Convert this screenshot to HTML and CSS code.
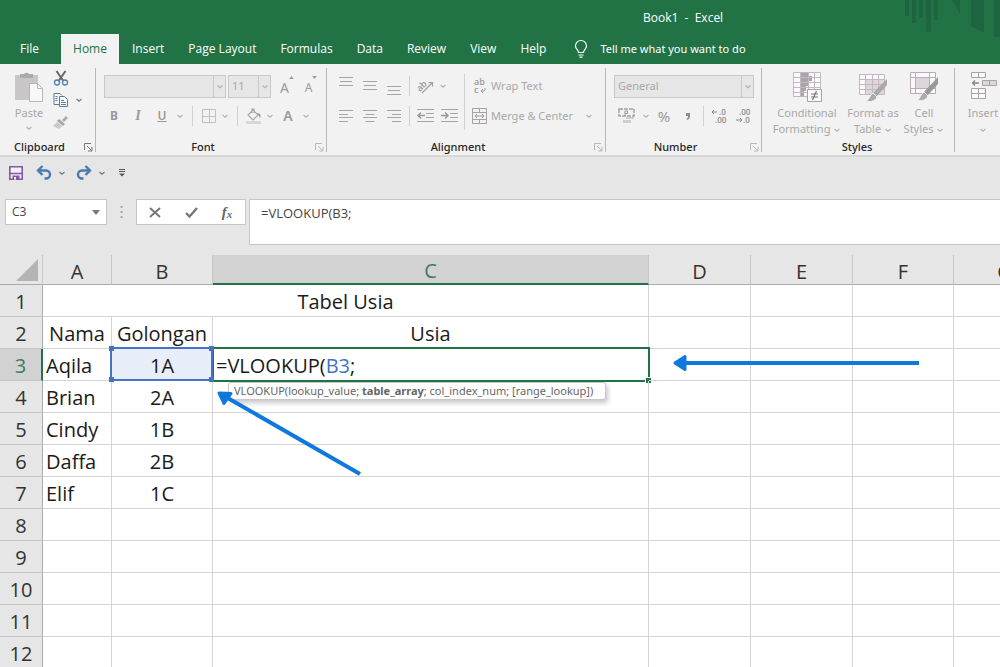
FILE: index.html
```html
<!DOCTYPE html>
<html lang="en">
<head>
<meta charset="utf-8">
<title>Book1 - Excel</title>
<link rel="stylesheet" href="styles.css">
</head>
<body>
<svg class="defs" aria-hidden="true">
  <symbol id="chev" viewBox="0 0 8 8"><path d="M1.500 3 4 5.200 6.500 3" fill="none" stroke="currentColor" stroke-width="1.200"/></symbol>
  <symbol id="launch" viewBox="0 0 9 9"><path d="M.5 7V.5H7M3 3l4.500 4.500M8 4v4H4" fill="none" stroke="currentColor"/></symbol>
</svg>

<header class="top">
  <svg class="deco" viewBox="0 0 96 38" aria-hidden="true">
    <path d="M1 0h4v16H1zM8 0h4v23H8zM15 0h4v18h-4zM22 0h5v32h-5zM30 0h4v20h-4zM48 0h8v14zM67 0h13v33L67 26zM90 0h6v37h-6z"/>
  </svg>
  <div class="title">Book1&nbsp; -&nbsp; Excel</div>
  <nav class="tabs">
    <button class="tab tab-file">File</button>
    <button class="tab tab-on">Home</button>
    <button class="tab">Insert</button>
    <button class="tab">Page Layout</button>
    <button class="tab">Formulas</button>
    <button class="tab">Data</button>
    <button class="tab">Review</button>
    <button class="tab">View</button>
    <button class="tab">Help</button>
    <button class="tab tell"><svg width="14" height="18" viewBox="0 0 14 18"><path d="M4.500 12.500c0-2.500-3-3.200-3-6.500a5.500 5.500 0 0 1 11 0c0 3.300-3 4-3 6.500zM4.500 15h5M5.500 17.200h3" fill="none" stroke="#fff" stroke-width="1.200"/></svg>Tell me what you want to do</button>
  </nav>
</header>

<section class="ribbon">
  <div class="group g-clip">
    <div class="body">
      <button class="big paste">
        <svg width="30" height="32" viewBox="0 0 30 32"><path d="M1 4h23v25H1z" fill="#c9c6c8"/><path d="M6 7V3h4a3 3 0 0 1 5 0h4v4z" fill="#aaa"/><path d="M15.500 12.500h8l5 5v13h-13z" fill="#f8f8f8" stroke="#b8b4b7"/><path d="M23.500 12.500v5h5" fill="none" stroke="#b8b4b7"/></svg>
        <span>Paste</span>
        <svg class="chev"><use href="#chev"/></svg>
      </button>
      <div class="clipcol">
        <button class="ib" aria-label="Cut"><svg width="16" height="16" viewBox="0 0 16 16"><path d="M3.500 1 10 10.500M12.500 1 6 10.500" stroke="#666" stroke-width="2" fill="none"/><circle cx="4" cy="12.500" r="2.500" fill="none" stroke="#4b7fb5" stroke-width="1.300"/><circle cx="12" cy="12.500" r="2.500" fill="none" stroke="#4b7fb5" stroke-width="1.300"/></svg></button>
        <span class="pair"><button class="ib" aria-label="Copy"><svg width="16" height="14" viewBox="0 0 16 14"><path d="M6 11.500H1V.5h6l2 2" fill="#f8f8f8" stroke="#66788c"/><path d="M6.500 3.500h5l3 3v7h-8z" fill="#f8f8f8" stroke="#66788c"/><path d="M2.500 3.500h2M2.500 5.500h2M2.500 7.500h2M8 7.500h3M8 9.500h5M8 11.500h5" stroke="#4b7fb5"/></svg></button><svg class="chev dark"><use href="#chev"/></svg></span>
        <button class="ib" aria-label="Format Painter"><svg width="16" height="14" viewBox="0 0 16 14"><path d="M9 5 13 1l2 2-4 4z" fill="#aaa"/><path d="M6 4l6 5-2 2-6-5z" fill="#a5a5a5"/><path d="M4 7 9 11l-3 3-6-3z" fill="#ccc7ca"/></svg></button>
      </div>
    </div>
    <div class="label"><span>Clipboard</span><svg class="launch dark"><use href="#launch"/></svg></div>
  </div>

  <div class="group g-font">
    <div class="body rows">
      <div class="row fonts">
        <span class="sel sel-name"><select aria-label="Font" disabled><option></option></select><svg class="chev"><use href="#chev"/></svg></span>
        <span class="sel sel-size"><select aria-label="Font size" disabled><option>11</option></select><svg class="chev"><use href="#chev"/></svg></span>
        <button class="ib letter grow" aria-label="Increase font size">A<svg width="5" height="3" viewBox="0 0 6 4"><path d="M0 4 3 0l3 4z" fill="#999"/></svg></button>
        <button class="ib letter shrink" aria-label="Decrease font size">A<svg width="5" height="3" viewBox="0 0 6 4"><path d="M0 0 3 4l3-4z" fill="#999"/></svg></button>
      </div>
      <div class="row">
        <button class="ib letter b">B</button><button class="ib letter i">I</button><button class="ib letter u">U</button><svg class="chev"><use href="#chev"/></svg>
        <i class="sep"></i>
        <button class="ib narrow" aria-label="Borders"><svg width="14" height="14" viewBox="0 0 14 14"><path d="M.5.5h13v13H.5zM7.500.5v13M.5 7.500h13" fill="none" stroke="#c8bcc8"/></svg></button><svg class="chev"><use href="#chev"/></svg>
        <i class="sep"></i>
        <button class="ib narrow" aria-label="Fill color"><svg width="16" height="17" viewBox="0 0 16 17"><path d="M7 2 12 7 7 12 2 7zM6 5V1h2v4" fill="none" stroke="#a5a5a5" stroke-width="1.200"/><path d="M11 5c4 0 4 3 3 5-1-1-1-3-3-5z" fill="#999"/><path d="M0 13h15v3H0z" fill="#ded5db"/></svg></button><svg class="chev"><use href="#chev"/></svg>
        <button class="ib letter fc">A</button><svg class="chev"><use href="#chev"/></svg>
      </div>
    </div>
    <div class="label"><span>Font</span><svg class="launch"><use href="#launch"/></svg></div>
  </div>

  <div class="group g-align">
    <div class="body">
      <div class="rows">
        <div class="row">
          <button class="ib" aria-label="Top align"><svg width="14" height="18" viewBox="0 0 14 18"><path d="M0 .5h14M1 4.500h12M0 8.500h14" stroke="#a6a6a6"/></svg></button>
          <button class="ib" aria-label="Middle align"><svg width="14" height="18" viewBox="0 0 14 18"><path d="M0 4.500h14M1 8.500h12M0 12.500h14" stroke="#a6a6a6"/></svg></button>
          <button class="ib" aria-label="Bottom align"><svg width="14" height="18" viewBox="0 0 14 18"><path d="M0 9.500h14M1 13.500h12M0 17.500h14" stroke="#a6a6a6"/></svg></button>
          <i class="sep"></i>
          <button class="ib" aria-label="Orientation"><svg width="18" height="16" viewBox="0 0 18 16"><path d="M6 15 16 5M12.500 4.500H16.500V8.500" fill="none" stroke="#a0a0a0" stroke-width="1.200"/><text x="1" y="11" transform="rotate(-45 6 9)" class="ab">ab</text></svg></button><svg class="chev"><use href="#chev"/></svg>
        </div>
        <div class="row">
          <button class="ib" aria-label="Align left"><svg width="14" height="12" viewBox="0 0 14 12"><path d="M0 .5h14M0 4.500h9M0 7.500h14M0 11.500h9" stroke="#a6a6a6"/></svg></button>
          <button class="ib" aria-label="Center"><svg width="14" height="12" viewBox="0 0 14 12"><path d="M0 .5h14M2.500 4.500h9M0 7.500h14M2.500 11.500h9" stroke="#a6a6a6"/></svg></button>
          <button class="ib" aria-label="Align right"><svg width="14" height="12" viewBox="0 0 14 12"><path d="M0 .5h14M5 4.500h9M0 7.500h14M5 11.500h9" stroke="#a6a6a6"/></svg></button>
          <i class="sep"></i>
          <button class="ib" aria-label="Decrease indent"><svg width="17" height="14" viewBox="0 0 17 14"><path d="M0 .5h17M9 4.500h8M9 8.500h8M0 12.500h17" stroke="#a6a6a6"/><path d="M8 6.500H1.500M4 3.500l-3 3 3 3" stroke="#999" stroke-width="1.500" fill="none"/></svg></button>
          <button class="ib" aria-label="Increase indent"><svg width="17" height="14" viewBox="0 0 17 14"><path d="M0 .5h17M9 4.500h8M9 8.500h8M0 12.500h17" stroke="#a6a6a6"/><path d="M0 6.500h6.500M4 3.500l3 3-3 3" stroke="#999" stroke-width="1.500" fill="none"/></svg></button>
        </div>
      </div>
      <i class="sep tall"></i>
      <div class="rows">
        <div class="row"><button class="tb"><svg width="16" height="16" viewBox="0 0 16 16"><text x="2" y="7" class="ab">ab</text><text x="2" y="15" class="ab">c</text><path d="M13 10v1.500L12 13H9M11 11l-2 2 2 2" fill="none" stroke="#999"/></svg>Wrap Text</button></div>
        <div class="row"><button class="tb"><svg width="16" height="16" viewBox="0 0 16 16"><path d="M.5.5h14v15H.5zM.5 4.500h14M.5 11.500h14M7.500.5v4M7.500 11.500v4" fill="none" stroke="#a99fa8"/><path d="M3 8h9M5 6 3 8l2 2M10 6l2 2-2 2" fill="none" stroke="#999"/></svg>Merge &amp; Center</button><svg class="chev"><use href="#chev"/></svg></div>
      </div>
    </div>
    <div class="label"><span>Alignment</span><svg class="launch"><use href="#launch"/></svg></div>
  </div>

  <div class="group g-num">
    <div class="body rows">
      <div class="row"><span class="sel sel-num"><select aria-label="Number format" disabled><option>General</option></select><svg class="chev"><use href="#chev"/></svg></span></div>
      <div class="row">
        <button class="ib cur" aria-label="Accounting format"><svg width="17" height="16" viewBox="0 0 17 16"><path d="M1 1h15v7H1z" fill="none" stroke="#a5a0a4" stroke-width="1.500" stroke-dasharray="4 1"/><path d="M7 8V3h2.500v2.500H7" fill="none" stroke="#999"/><path d="M8 9h8v2H8zM5 12h8v3H5z" fill="#d0cdd0"/></svg></button><svg class="chev"><use href="#chev"/></svg>
        <button class="ib letter pct">%</button>
        <button class="ib comma" aria-label="Comma style"><svg width="6" height="9" viewBox="0 0 6 9"><path d="M1 1h4v3c0 2-1 3-3 4l-.5-1C3 6 3 5 3 4H1z" fill="#8c8c8c"/></svg></button>
        <i class="sep"></i>
        <button class="ib" aria-label="Increase decimal"><svg width="16" height="16" viewBox="0 0 16 16"><path d="M6 4H1M3 2 1 4l2 2" fill="none" stroke="#888"/><text x="8" y="7" class="dec">.0</text><text x="4" y="15" class="dec">.00</text></svg></button>
        <button class="ib" aria-label="Decrease decimal"><svg width="16" height="16" viewBox="0 0 16 16"><path d="M1 12h6M5 10l2 2-2 2" fill="none" stroke="#888"/><text x="4" y="7" class="dec">.00</text><text x="8" y="15" class="dec">.0</text></svg></button>
      </div>
    </div>
    <div class="label"><span>Number</span><svg class="launch"><use href="#launch"/></svg></div>
  </div>

  <div class="group g-style">
    <div class="body">
      <button class="big w78"><svg width="30" height="32" viewBox="0 0 30 32"><path d="M1 1h28v24H1z" fill="#faf8fa"/><path d="M8 1h9v4h3v5h-3v5h-3v5h-2v5H8z" fill="#aaa5a9"/><path d="M1.500 1.500h27v24h-27zM1.500 6.500h27M1.500 11.500h27M1.500 16.500h27M1.500 21.500h27M8.500 1v24M16.500 1v24M22.500 1v24" fill="none" stroke="#c2b8c1"/><path d="M15.500 18.500h14v12h-14z" fill="#fafafa" stroke="#aaa0a8"/><path d="M19 23h7M19 26h7M24.500 20l-4 9" stroke="#777" stroke-width="1.200"/></svg><span>Conditional<br>Formatting <svg class="chev"><use href="#chev"/></svg></span></button>
      <button class="big w54"><svg width="30" height="32" viewBox="0 0 30 32"><path d="M1 3h25v20H1z" fill="#faf8fa"/><path d="M7 8h19v15H7z" fill="#ddd7dc"/><path d="M1.500 3.500h25v20h-25zM1.500 8.500h25M1.500 13.500h25M1.500 18.500h25M7.500 3v20M14.500 3v20M20.500 3v20" fill="none" stroke="#c2b8c1"/><path d="M29 8v6L18 26l-4-3z" fill="#aaa"/><path d="M15 22l4 4c-2 5-8 5-11 4 4-1 3-6 7-8z" fill="#aaa" stroke="#f2f2f2"/></svg><span>Format as<br>Table <svg class="chev"><use href="#chev"/></svg></span></button>
      <button class="big w48"><svg width="30" height="32" viewBox="0 0 30 32"><path d="M1 1h25v22H1z" fill="#faf8fa"/><path d="M6 6h14v11H6z" fill="#ddd7dc"/><path d="M1.500 1.500h25v21h-25zM1.500 6.500h25M1.500 17.500h25M6.500 1v22M20.500 1v22" fill="none" stroke="#b9aeb8"/><path d="M29 6v7L18 25l-4-3z" fill="#999"/><path d="M15 21l4 4c-2 5-8 5-11 4 4-1 3-6 7-8z" fill="#aaa" stroke="#f2f2f2"/></svg><span>Cell<br>Styles <svg class="chev"><use href="#chev"/></svg></span></button>
    </div>
    <div class="label plain"><span>Styles</span></div>
  </div>

  <div class="group g-cells">
    <div class="body">
      <button class="big w54"><svg width="27" height="32" viewBox="0 0 27 32"><path d="M1.500 1.500h14v5h-14zM8.500 1.500v5M1.500 17.500h14v10h-14zM1.500 22.500h14M8.500 17.500v10" fill="#fafafa" stroke="#a9a3a8"/><path d="M12.500 9.500h14v5h-14zM19.500 9.500v5" fill="#ddd7dc" stroke="#a9a3a8"/><path d="M9 12H2.500M5 9.500 2.500 12 5 14.500" fill="none" stroke="#888" stroke-width="1.300"/></svg><span>Insert<br><svg class="chev"><use href="#chev"/></svg></span></button>
    </div>
  </div>
</section>

<div class="qat">
  <button class="ib" aria-label="Save"><svg width="16" height="16" viewBox="0 0 16 16"><path d="M1.800 1.800h12.400v12.400H1.800z" fill="#f4f0f7" stroke="#8456a8" stroke-width="1.600"/><path d="M2 8.500h12" stroke="#8456a8" stroke-width="1.500"/><path d="M4.500 10.500h7v4h-7z" fill="#8456a8"/><path d="M6 12h2v2.500H6z" fill="#fff"/></svg></button>
  <span class="pair"><button class="ib" aria-label="Undo"><svg width="16" height="16" viewBox="0 0 16 16"><path d="M3 5.500h7a4 4 0 0 1 0 8H8.500" fill="none" stroke="#4a79b0" stroke-width="2.400"/><path d="M6.500 1 2 5.500 6.500 10" fill="none" stroke="#4a79b0" stroke-width="2.400"/></svg></button><svg class="chev dark"><use href="#chev"/></svg></span>
  <span class="pair"><button class="ib" aria-label="Redo"><svg width="16" height="16" viewBox="0 0 16 16"><path d="M13 5.500H6a4 4 0 0 0 0 8h1.500" fill="none" stroke="#4a79b0" stroke-width="2.400"/><path d="M9.500 1 14 5.500 9.500 10" fill="none" stroke="#4a79b0" stroke-width="2.400"/></svg></button><svg class="chev dark"><use href="#chev"/></svg></span>
  <button class="more" aria-label="Customize toolbar"><svg width="6" height="8" viewBox="0 0 6 8"><path d="M0 .5h6M0 2.500h6" stroke="#555"/><path d="M0 4.500h6L3 7.500z" fill="#555"/></svg></button>
</div>

<div class="fbar">
  <div class="namebox"><input aria-label="Name box" value="C3"><svg width="8" height="5" viewBox="0 0 8 5"><path d="M0 0h8L4 5z" fill="#777"/></svg></div>
  <svg class="grip" width="3" height="13" viewBox="0 0 3 13"><path d="M1.500 0v13" stroke="#aaa" stroke-width="2" stroke-dasharray="2 3"/></svg>
  <div class="fbtns">
    <button aria-label="Cancel"><svg width="12" height="11" viewBox="0 0 12 11"><path d="M1 1l10 9M11 1 1 10" stroke="#777" stroke-width="2"/></svg></button>
    <button aria-label="Enter"><svg width="13" height="11" viewBox="0 0 13 11"><path d="M1 6l3.500 3.500L12 1" fill="none" stroke="#777" stroke-width="2.400"/></svg></button>
    <button class="fx" aria-label="Insert function">f<small>x</small></button>
  </div>
  <textarea class="formula" aria-label="Formula bar" spellcheck="false">=VLOOKUP(B3;</textarea>
</div>

<main class="sheet">
  <table class="grid">
    <colgroup><col class="c0"><col class="ca"><col class="cb"><col class="cc"><col class="cd"><col class="cd"><col class="cf"><col class="cd"></colgroup>
    <thead><tr><th class="corner"><svg width="23" height="22" viewBox="0 0 23 22"><path d="M22 0v22H0z" fill="#b4b4b4"/></svg></th><th>A</th><th>B</th><th class="on">C</th><th>D</th><th>E</th><th>F</th><th>G</th></tr></thead>
    <tbody>
      <tr><th>1</th><td colspan="3" class="mid">Tabel Usia</td><td></td><td></td><td></td><td></td></tr>
      <tr><th>2</th><td class="mid">Nama</td><td class="mid">Golongan</td><td class="mid">Usia</td><td></td><td></td><td></td><td></td></tr>
      <tr><th class="on">3</th><td>Aqila</td><td class="mid ref">1A<span class="box"><i></i><i></i><i></i><i></i></span></td><td class="edit">=VLOOKUP(<span class="arg">B3</span>;<span class="cursor"><i></i></span><span class="tip">VLOOKUP(lookup_value; <b>table_array</b>; col_index_num; [range_lookup])</span></td><td></td><td></td><td></td><td></td></tr>
      <tr><th>4</th><td>Brian</td><td class="mid">2A</td><td></td><td></td><td></td><td></td><td></td></tr>
      <tr><th>5</th><td>Cindy</td><td class="mid">1B</td><td></td><td></td><td></td><td></td><td></td></tr>
      <tr><th>6</th><td>Daffa</td><td class="mid">2B</td><td></td><td></td><td></td><td></td><td></td></tr>
      <tr><th>7</th><td>Elif</td><td class="mid">1C</td><td></td><td></td><td></td><td></td><td></td></tr>
      <tr><th>8</th><td></td><td></td><td></td><td></td><td></td><td></td><td></td></tr>
      <tr><th>9</th><td></td><td></td><td></td><td></td><td></td><td></td><td></td></tr>
      <tr><th>10</th><td></td><td></td><td></td><td></td><td></td><td></td><td></td></tr>
      <tr><th>11</th><td></td><td></td><td></td><td></td><td></td><td></td><td></td></tr>
      <tr><th>12</th><td></td><td></td><td></td><td></td><td></td><td></td><td></td></tr>
    </tbody>
  </table>
  <svg class="arrows" width="1000" height="412" viewBox="0 255 1000 412" aria-hidden="true">
    <path d="M919 363H684M360 474 226 397" stroke="#0f78dc" stroke-width="4"/>
    <path d="M675 363l10-6.500v13zM219 393l12 .5-7 10z" fill="#0f78dc" stroke="#0f78dc" stroke-width="3" stroke-linejoin="round"/>
  </svg>
</main>
</body>
</html>
```
FILE: styles.css
```css
* { box-sizing: border-box; }
body {
  margin: 0;
  height: 100vh;
  display: flex;
  flex-direction: column;
  overflow: hidden;
  background: #e6e6e6;
  font: 11px/16px "Noto Sans", "Open Sans", sans-serif;
  color: #262626;
}
button { border: 0; padding: 0; margin: 0; background: none; font: inherit; color: inherit; }
svg { display: block; flex: none; overflow: visible; }
.defs { position: absolute; width: 0; height: 0; }

/* title and tabs */
.top { position: relative; background: #217346; color: #fff; flex: none; font: 12px/16px "Open Sans", sans-serif; }
.deco { position: absolute; right: 0; top: 0; width: 96px; height: 38px; fill: #1c6540; }
.title { height: 34px; padding: 10px 0 0 643px; }
.tabs { display: flex; height: 30px; padding-left: 11px; }
.tab { padding: 0 12px; white-space: nowrap; }
.tab:nth-child(3) { padding-left: 13px; }
.tab-file { width: 50px; padding: 0 0 0 9px; text-align: left; }
.tab-on { width: 58px; background: #f2f2f2; color: #217346; padding: 0; }
.tell { display: flex; align-items: center; gap: 12px; padding-left: 16px; font: 11px/16px "Noto Sans", sans-serif; }

/* ribbon */
.ribbon { display: flex; flex: none; height: 93px; background: #f2f2f2; border-bottom: 2px solid #d8d8d8; color: #a8a8a8; overflow: hidden; }
.group { display: flex; flex-direction: column; flex: none; padding: 7px 0 0; position: relative; }
.group + .group::before { content: ""; position: absolute; left: -1px; top: 4px; bottom: 3px; width: 1px; background: #b8b8b8; }
.body { display: flex; height: 68px; }
.label { display: flex; align-items: center; color: #262626; height: 16px; padding-right: 3px; font-weight: 500; }
.label span { flex: 1; text-align: center; padding-right: 5px; }
.label.plain span { padding: 0; }
.g-clip { width: 96px; }
.g-font { width: 231px; }
.g-align { width: 279px; }
.g-num { width: 156px; }
.g-style { width: 193px; }
.g-cells { width: 90px; }
.rows { display: flex; flex-direction: column; }
.row { display: flex; align-items: center; height: 30px; }
.ib { display: flex; align-items: center; justify-content: center; width: 24px; height: 20px; }
.ib.narrow { width: 20px; }
.chev { width: 8px; height: 8px; margin: 0 2px; color: #b4b4b4; }
.dark { color: #777; }
.launch { width: 9px; height: 9px; color: #b8b8b8; }
.launch.dark { color: #777; }
.sep { width: 1px; height: 20px; background: #d0d0d0; margin: 0 6px; flex: none; }
.sep.tall { height: 56px; margin: 3px 7px 0 3px; }
.letter { font-size: 14px; font-weight: 600; color: #9a9a9a; }
.b { font-weight: 700; font-size: 12px; }
.i { font: italic 700 14px "Liberation Serif", serif; }
.u { text-decoration: underline; font-size: 12px; }
.grow, .shrink { align-items: flex-start; font-size: 14px; font-weight: 400; line-height: 24px; }
.shrink { font-size: 12px; }
.sel { position: relative; display: block; }
.sel select { display: block; appearance: none; width: 100%; height: 23px; padding: 0 3px; border: 1px solid #c8c8c8; border-radius: 0; background: #e6e6e6; color: #a8a8a8; font: inherit; opacity: 1; }
.sel .chev { position: absolute; right: 0; top: 1px; width: 13px; height: 21px; margin: 0; padding: 0 2px; border-left: 1px solid #c8c8c8; }
.sel-name { width: 122px; }
.sel-size { width: 43px; margin: 0 4px 0 2px; }
.sel-num { width: 140px; }
.g-font .rows { padding-left: 6px; }
.g-font .fonts { padding-left: 2px; }
.g-align .body { padding-left: 7px; }
.g-align .row .sep { margin: 0 3px; }
.g-num .row { padding-left: 8px; }
.g-num .sep { margin: 0 3px; }
.cur { margin-right: 2px; }
.pct { font-size: 15px; font-weight: 400; }
.ab { font: 600 9px "Open Sans", sans-serif; fill: #999; }
.dec { font: 600 8px "Open Sans", sans-serif; fill: #8c8c8c; }
.tb { display: flex; align-items: center; gap: 3px; height: 20px; white-space: nowrap; }
.g-align .tb + .chev { margin-left: 12px; }

.big { display: flex; flex-direction: column; align-items: center; white-space: nowrap; }
.big span { text-align: center; padding-top: 2px; }
.big span .chev { display: inline-block; margin: 0; vertical-align: middle; }
.g-style .body { padding-left: 6px; }
.w78 { width: 78px; }
.w54 { width: 54px; }
.w48 { width: 48px; }
.g-cells .body { padding-left: 1px; }
.paste { width: 49px; padding-left: 9px; }
.paste .chev { margin-top: 3px; }
.clipcol { display: flex; flex-direction: column; gap: 2px; width: 44px; margin-top: -3px; }
.pair { display: flex; align-items: center; }

/* quick access toolbar */
.qat { display: flex; align-items: center; flex: none; height: 32px; padding-left: 4px; gap: 4px; }
.more { margin-left: 7px; }

/* formula bar */
.fbar { display: flex; align-items: flex-start; flex: none; height: 66px; padding: 10px 0 0 5px; color: #444; }
.namebox { display: flex; align-items: center; width: 102px; height: 26px; padding-right: 6px; background: #fff; border: 1px solid #c6c6c6; }
.namebox input { flex: 1; min-width: 0; border: 0; padding: 0 6px; background: none; font: 12px/16px "Open Sans", sans-serif; color: inherit; outline: 0; }
.grip { margin: 7px 13px 0; }
.fbtns { display: flex; width: 110px; height: 26px; background: #fff; border: 1px solid #c6c6c6; }
.fbtns button { flex: 1; display: flex; align-items: center; justify-content: center; }
.fbtns .fx { font: italic 700 15px "Liberation Serif", serif; color: #666; }
.fx small { font-size: 11px; padding-top: 3px; }
.formula { flex: 1; height: 46px; margin-left: 3px; padding: 5px 11px; border: 1px solid #c6c6c6; border-right: 0; border-radius: 0; background: #fff; font: 13px/16px "Open Sans", sans-serif; color: inherit; resize: none; outline: 0; }

/* worksheet */
.sheet { position: relative; flex: 1; min-height: 0; overflow: hidden; background: #fff; }
.grid { table-layout: fixed; width: 1056px; border-collapse: separate; border-spacing: 0; font: 20px/24px "Open Sans", "Noto Sans", sans-serif; color: #1a1a1a; }
.c0 { width: 43px; }
.ca { width: 69px; }
.cb, .cf { width: 101px; }
.cc { width: 436px; }
.cd { width: 102px; }
.grid th { height: 32px; padding: 2px 0 0; font-weight: 400; background: #e6e6e6; border-right: 1px solid #ababab; border-bottom: 1px solid #c6c6c6; color: #333; }
.grid thead th { height: 30px; padding-top: 4px; border-right-color: #c6c6c6; border-bottom-color: #ababab; }
.grid .on { background: #d2d2d2; color: #3f7a5a; }
.grid thead .on { border-bottom: 2px solid #217346; }
.grid tbody .on { border-right: 2px solid #217346; }
.grid .corner { padding: 0 3px 0 0; }
.corner svg { margin-left: auto; }
.grid td { height: 32px; padding: 2px 3px 0; border-right: 1px solid #d4d4d4; border-bottom: 1px solid #d4d4d4; white-space: nowrap; position: relative; }
.grid .mid { text-align: center; padding: 2px 0 0; }
.ref { background: #e8eef9; }
.box { position: absolute; inset: -2px -1px -1px -2px; border: 2px solid #4472c4; z-index: 2; }
.box i { position: absolute; width: 5px; height: 5px; background: #4472c4; }
.box i:nth-child(odd) { left: -3px; }
.box i:nth-child(even) { right: -3px; }
.box i:nth-child(-n+2) { top: -3px; }
.box i:nth-child(n+3) { bottom: -3px; }
.arg { color: #4472c4; }
.cursor { position: absolute; inset: -2px -2px -2px 0; border: 2px solid #217346; border-left-width: 1px; }
.cursor i { position: absolute; right: -3px; bottom: -3px; width: 6px; height: 6px; background: #217346; border: 1px solid #fff; border-width: 1px 0 0 1px; }
.tip { position: absolute; left: 15px; top: 33px; z-index: 1; padding: 0 12px 0 5px; background: #fff; border: 1px solid #c8c8c8; border-radius: 3px; box-shadow: 2px 3px 5px rgba(0,0,0,.22); font: 11px/16px "Noto Sans", sans-serif; color: #666; }
.arrows { position: absolute; left: 0; top: 0; z-index: 3; pointer-events: none; }
```
